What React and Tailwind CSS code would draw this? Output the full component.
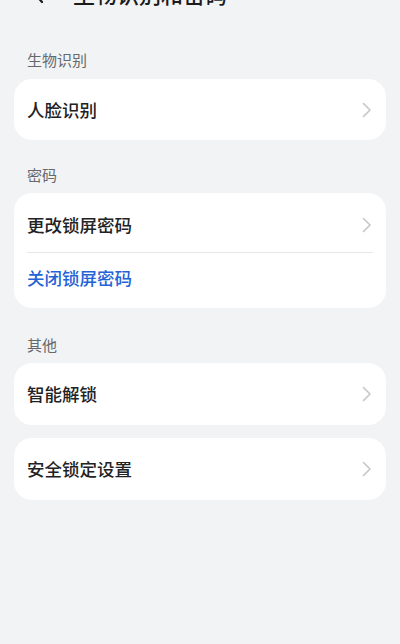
import React from "react";

const font = {
  fontFamily: '"Noto Sans CJK SC", "Noto Sans", sans-serif',
};

const Chevron = () => (
  <svg width="10" height="16" viewBox="0 0 10 16" fill="none" className="shrink-0">
    <path
      d="M1.5 1.5 L8 8 L1.5 14.5"
      stroke="#c4c6c8"
      strokeWidth="1.6"
      strokeLinecap="round"
      strokeLinejoin="round"
    />
  </svg>
);

const SectionLabel = ({ children, className }) => (
  <div className={`pl-[13px] text-[15px] leading-5 text-[#66686b] ${className}`}>
    {children}
  </div>
);

const Row = ({ label, className = "" }) => (
  <div className={`flex items-center justify-between pl-[13px] pr-[14px] ${className}`}>
    <span className="text-[17.5px] leading-6 font-medium text-[#222224]">{label}</span>
    <Chevron />
  </div>
);

export default function App() {
  return (
    <div
      className="min-h-[644px] w-full bg-[#f1f3f5] overflow-hidden"
      style={font}
    >
      {/* header, partly scrolled out of view */}
      <div className="-mt-[35px] flex h-14 items-center pl-[31px]">
        <svg width="14" height="22" viewBox="0 0 14 22" fill="none">
          <path
            d="M11 2 L3 11 L11 20"
            stroke="#1b1b1c"
            strokeWidth="2.2"
            strokeLinecap="round"
            strokeLinejoin="round"
          />
        </svg>
        <h1 className="ml-[28px] text-[22px] font-medium leading-7 text-[#1b1b1c]">
          生物识别和密码
        </h1>
      </div>

      <div className="px-[14px]">
        <SectionLabel className="pt-[29px] pb-[9px]">生物识别</SectionLabel>
        <div className="rounded-[18px] bg-white">
          <Row label="人脸识别" className="h-[61px]" />
        </div>

        <SectionLabel className="pt-[25px] pb-[8px]">密码</SectionLabel>
        <div className="rounded-[18px] bg-white">
          <Row label="更改锁屏密码" className="pt-[20px] pb-[15px]" />
          <div className="mx-[13px] h-px bg-[#e6e7e9]" />
          <div className="pl-[13px] pt-[13px] pb-[18px]">
            <span className="text-[17.5px] leading-6 font-medium text-[#2463d6]">
              关闭锁屏密码
            </span>
          </div>
        </div>

        <SectionLabel className="pt-[27px] pb-[8px]">其他</SectionLabel>
        <div className="flex flex-col gap-[13px]">
          <div className="rounded-[18px] bg-white">
            <Row label="智能解锁" className="h-[62px]" />
          </div>
          <div className="rounded-[18px] bg-white">
            <Row label="安全锁定设置" className="h-[62px]" />
          </div>
        </div>
      </div>
    </div>
  );
}
